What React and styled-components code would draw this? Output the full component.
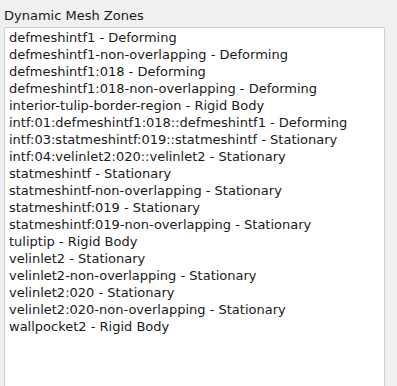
import React from 'react';
import styled, { createGlobalStyle } from 'styled-components';

const zones = [
   'defmeshintf1 - Deforming',
   'defmeshintf1-non-overlapping - Deforming',
   'defmeshintf1:018 - Deforming',
   'defmeshintf1:018-non-overlapping - Deforming',
   'interior-tulip-border-region - Rigid Body',
   'intf:01:defmeshintf1:018::defmeshintf1 - Deforming',
   'intf:03:statmeshintf:019::statmeshintf - Stationary',
   'intf:04:velinlet2:020::velinlet2 - Stationary',
   'statmeshintf - Stationary',
   'statmeshintf-non-overlapping - Stationary',
   'statmeshintf:019 - Stationary',
   'statmeshintf:019-non-overlapping - Stationary',
   'tuliptip - Rigid Body',
   'velinlet2 - Stationary',
   'velinlet2-non-overlapping - Stationary',
   'velinlet2:020 - Stationary',
   'velinlet2:020-non-overlapping - Stationary',
   'wallpocket2 - Rigid Body',
];

const GlobalStyle = createGlobalStyle`
   html, body {
      margin: 0;
      background: #f0f0f0;
      font-family: "DejaVu Sans", sans-serif;
      overflow: hidden;
   }
`;

const Panel = styled.div`
   display: flex;
   flex-direction: column;
   padding: 8px 12px 0 4px;
   height: 386px;
   box-sizing: border-box;
`;

const Label = styled.div`
   font-size: 13px;
   color: #1a1a1a;
   line-height: 16px;
   margin-bottom: 3px;
`;

const ListBox = styled.div`
   flex: 1;
   background: #fff;
   border: 1px solid #d0d0d0;
   border-bottom: none;
   border-radius: 2px 2px 0 0;
   padding: 1px 4px;
`;

const Item = styled.div`
   font-size: 13px;
   line-height: 17px;
   color: #1a1a1a;
   white-space: nowrap;
`;

const App = () => {
   return (
      <>
         <GlobalStyle />
         <Panel>
            <Label>Dynamic Mesh Zones</Label>
            <ListBox>
               {zones.map((z) => (
                  <Item key={z}>{z}</Item>
               ))}
            </ListBox>
         </Panel>
      </>
   );
};

export default App;
